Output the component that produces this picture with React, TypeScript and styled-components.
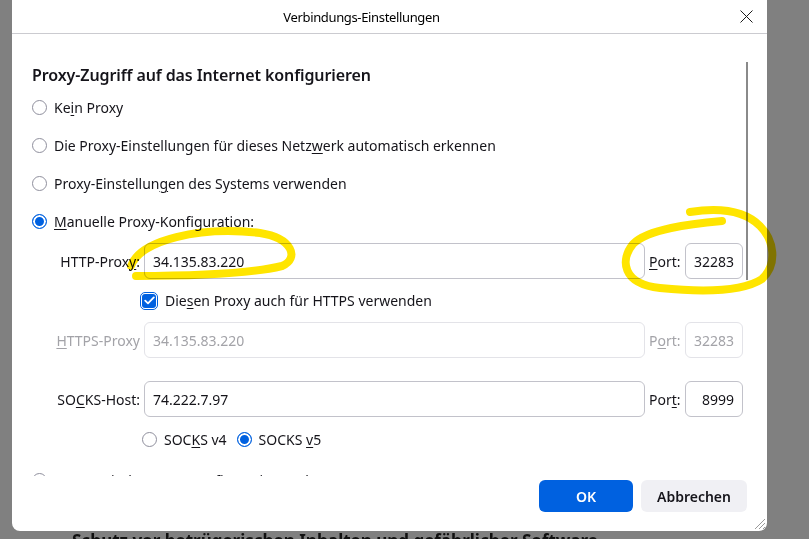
import React from 'react';
import styled, { createGlobalStyle } from 'styled-components';

const GlobalStyle = createGlobalStyle`
  html, body {
    margin: 0;
    height: 100%;
  }
  body {
    background: #808080;
    font-family: "Noto Sans", "Open Sans", sans-serif;
    color: #15141a;
    overflow: hidden;
  }
`;

const blue = '#0061e0';
const ink = '#15141a';
const muted = '#a3a3a8';

const Page = styled.div`
  position: relative;
  width: 809px;
  height: 539px;
  overflow: hidden;
`;

// settings page sitting behind the modal, dimmed
const Backdrop = styled.div`
  height: 100%;
  padding: 530px 0 0 72px;
  box-sizing: border-box;
  font-size: 17px;
  font-weight: 700;
  line-height: 22px;
  color: #101010;
  white-space: nowrap;
`;

const Dialog = styled.div`
  position: absolute;
  left: 12px;
  top: 0;
  width: 755px;
  height: 531px;
  background: #fff;
  border-radius: 0 0 8px 8px;
  display: flex;
  flex-direction: column;
`;

const TitleBar = styled.div`
  height: 33px;
  flex: none;
  border-bottom: 1px solid #cbcbd0;
  display: grid;
  grid-template-columns: 1fr auto 1fr;
  align-items: center;
`;

const Title = styled.div`
  grid-column: 2;
  margin-right: 56px;
  font-size: 13px;
  letter-spacing: -0.35px;
  color: #000;
`;

const CloseButton = styled.div`
  grid-column: 3;
  justify-self: end;
  margin-right: 14px;
  width: 13px;
  height: 13px;
  display: flex;
`;

const Body = styled.div`
  height: 442px;
  flex: none;
  display: flex;
  overflow: hidden;
`;

const Content = styled.div`
  flex: 1;
  padding: 30px 0 0 20px;
`;

const ScrollThumb = styled.div`
  width: 2px;
  height: 218px;
  margin: 28px 19px 0 0;
  background: #8a8a8a;
`;

const Heading = styled.div`
  font-size: 16px;
  font-weight: 600;
  line-height: 22px;
  letter-spacing: -0.1px;
  margin-bottom: 2px;
`;

const OptionRow = styled.div<{ $height?: number; $indent?: number }>`
  height: ${(p) => p.$height ?? 38}px;
  padding-left: ${(p) => p.$indent ?? 0}px;
  display: flex;
  align-items: center;
  gap: 7px;
  font-size: 14px;
`;

const Radio = styled.span<{ $checked?: boolean; $gapBefore?: number }>`
  width: 15px;
  height: 15px;
  flex: none;
  box-sizing: border-box;
  margin-left: ${(p) => p.$gapBefore ?? 0}px;
  border-radius: 50%;
  border: ${(p) => (p.$checked ? `1.5px solid ${blue}` : '1px solid #8f8f9d')};
  background: ${(p) => (p.$checked ? blue : '#fff')};
  box-shadow: ${(p) => (p.$checked ? 'inset 0 0 0 2px #fff' : 'none')};
`;

const Key = styled.u`
  text-underline-offset: 2px;
  text-decoration-thickness: 1px;
`;

const FieldRow = styled.div<{ $top?: number }>`
  height: 36px;
  margin-top: ${(p) => p.$top ?? 0}px;
  display: flex;
  align-items: center;
  gap: 4px;
  font-size: 14px;
`;

const FieldLabel = styled.label<{ $disabled?: boolean }>`
  width: 108px;
  text-align: right;
  white-space: nowrap;
  color: ${(p) => (p.$disabled ? muted : ink)};
`;

const Field = styled.div<{ $disabled?: boolean; $width: number; $right?: boolean }>`
  width: ${(p) => p.$width}px;
  height: 36px;
  box-sizing: border-box;
  border: 1px solid ${(p) => (p.$disabled ? '#e3e3e8' : '#c2c2ca')};
  border-radius: 6px;
  padding: 0 8px;
  display: flex;
  align-items: center;
  justify-content: ${(p) => (p.$right ? 'flex-end' : 'flex-start')};
  color: ${(p) => (p.$disabled ? muted : ink)};
`;

const PortLabel = styled.span<{ $disabled?: boolean }>`
  width: 32px;
  color: ${(p) => (p.$disabled ? muted : ink)};
`;

const CheckRow = styled.div`
  height: 43px;
  padding-left: 107px;
  display: flex;
  align-items: center;
  gap: 6px;
  font-size: 14px;
`;

const CheckBox = styled.span`
  width: 14px;
  height: 14px;
  margin: 3px;
  flex: none;
  border-radius: 3px;
  background: ${blue};
  outline: 1.5px solid ${blue};
  outline-offset: 1px;
  display: flex;
  align-items: center;
  justify-content: center;
`;

const Footer = styled.div`
  flex: 1;
  display: flex;
  justify-content: flex-end;
  align-items: flex-start;
  gap: 8px;
  padding: 4px 20px 0 0;
`;

const Button = styled.div<{ $primary?: boolean }>`
  height: 32px;
  width: ${(p) => (p.$primary ? 94 : 106)}px;
  border-radius: 6px;
  display: flex;
  align-items: center;
  justify-content: center;
  font-size: 14px;
  font-weight: 600;
  background: ${(p) => (p.$primary ? blue : '#f0f0f4')};
  color: ${(p) => (p.$primary ? '#fff' : ink)};
`;

const Grip = styled.svg`
  position: absolute;
  right: 1px;
  bottom: 1px;
`;

const Marker = styled.svg`
  position: absolute;
  left: 0;
  top: 0;
  mix-blend-mode: multiply;
  pointer-events: none;
`;

export default function App() {
  return (
    <>
      <GlobalStyle />
      <Page>
        <Backdrop>Schutz vor betrügerischen Inhalten und gefährlicher Software</Backdrop>

        <Dialog>
          <TitleBar>
            <Title>Verbindungs-Einstellungen</Title>
            <CloseButton>
              <svg width="13" height="13" viewBox="0 0 13 13">
                <path d="M0.5 0.5 L12.5 12.5 M12.5 0.5 L0.5 12.5" stroke="#1b1b1b" strokeWidth="1" fill="none" />
              </svg>
            </CloseButton>
          </TitleBar>

          <Body>
            <Content>
              <Heading>Proxy-Zugriff auf das Internet konfigurieren</Heading>
              <OptionRow>
                <Radio />
                <span>
                  Ke<Key>i</Key>n Proxy
                </span>
              </OptionRow>
              <OptionRow>
                <Radio />
                <span>
                  Die Proxy-Einstellungen für dieses Netz<Key>w</Key>erk automatisch erkennen
                </span>
              </OptionRow>
              <OptionRow>
                <Radio />
                <span>
                  Proxy-Einstellun<Key>g</Key>en des Systems verwenden
                </span>
              </OptionRow>
              <OptionRow>
                <Radio $checked />
                <span>
                  <Key>M</Key>anuelle Proxy-Konfiguration:
                </span>
              </OptionRow>

              <FieldRow $top={3}>
                <FieldLabel>
                  HTTP-Prox<Key>y</Key>:
                </FieldLabel>
                <Field $width={501}>34.135.83.220</Field>
                <PortLabel>
                  <Key>P</Key>ort:
                </PortLabel>
                <Field $width={58} $right>32283</Field>
              </FieldRow>

              <CheckRow>
                <CheckBox>
                  <svg width="11" height="9" viewBox="0 0 11 9">
                    <path d="M1.2 4.6 L4 7.4 L9.8 1.4" stroke="#fff" strokeWidth="1.8" fill="none" strokeLinecap="round" strokeLinejoin="round" />
                  </svg>
                </CheckBox>
                <span>
                  Die<Key>s</Key>en Proxy auch für HTTPS verwenden
                </span>
              </CheckRow>

              <FieldRow>
                <FieldLabel $disabled>
                  <Key>H</Key>TTPS-Proxy
                </FieldLabel>
                <Field $width={501} $disabled>34.135.83.220</Field>
                <PortLabel $disabled>
                  P<Key>o</Key>rt:
                </PortLabel>
                <Field $width={58} $right $disabled>32283</Field>
              </FieldRow>

              <FieldRow $top={23}>
                <FieldLabel>
                  SO<Key>C</Key>KS-Host:
                </FieldLabel>
                <Field $width={501}>74.222.7.97</Field>
                <PortLabel>
                  Por<Key>t</Key>:
                </PortLabel>
                <Field $width={58} $right>8999</Field>
              </FieldRow>

              <OptionRow $height={44} $indent={110}>
                <Radio />
                <span>
                  SOC<Key>K</Key>S v4
                </span>
                <Radio $checked $gapBefore={3} />
                <span>
                  SOCKS <Key>v</Key>5
                </span>
              </OptionRow>
              <OptionRow>
                <Radio />
                <span>Automatische Proxy-Konfigurations-Adresse:</span>
              </OptionRow>
            </Content>
            <ScrollThumb />
          </Body>

          <Footer>
            <Button $primary>OK</Button>
            <Button>Abbrechen</Button>
          </Footer>

          <Grip width="14" height="14" viewBox="0 0 14 14">
            <path d="M13 3 L3 13 M13 7 L7 13 M13 11 L11 13" stroke="#9a9a9a" strokeWidth="1" />
          </Grip>
        </Dialog>

        {/* highlighter strokes */}
        <Marker width="809" height="539" viewBox="0 0 809 539">
          <g stroke="#ffe500" strokeWidth="8" fill="none" strokeLinecap="round" strokeLinejoin="round">
            <path d="M131 266 C 140 240, 200 226, 260 233 C 292 238, 300 258, 282 266 C 245 275, 185 276, 136 276" />
            <path d="M722 221 C 690 224, 648 229, 633 244 C 620 260, 622 284, 660 288 C 700 292, 742 292, 762 279 C 778 264, 774 240, 760 226 C 746 212, 722 207, 690 212" />
          </g>
        </Marker>
      </Page>
    </>
  );
}
